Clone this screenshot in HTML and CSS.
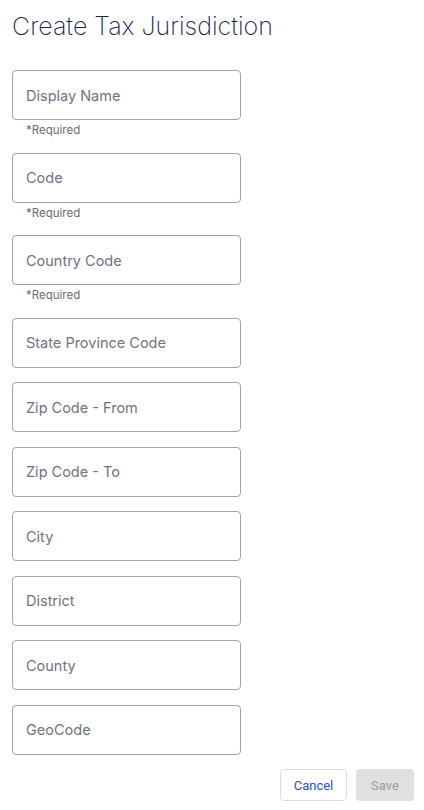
FILE: index.html
```html
<!DOCTYPE html>
<html lang="en">
<head>
    <meta charset="UTF-8">
    <meta name="viewport" content="width=device-width, initial-scale=1.0">
    <title>Create Tax Jurisdiction</title>
    <link rel="stylesheet" href="styles.css">
</head>
<body>
    <div class="page">
        <h1>Create Tax Jurisdiction</h1>
        <form class="form">
            <div class="field">
                <input type="text" placeholder="Display Name">
                <div class="hint">*Required</div>
            </div>
            <div class="field">
                <input type="text" placeholder="Code">
                <div class="hint">*Required</div>
            </div>
            <div class="field">
                <input type="text" placeholder="Country Code">
                <div class="hint">*Required</div>
            </div>
            <div class="field">
                <input type="text" placeholder="State Province Code">
            </div>
            <div class="field">
                <input type="text" placeholder="Zip Code - From">
            </div>
            <div class="field">
                <input type="text" placeholder="Zip Code - To">
            </div>
            <div class="field">
                <input type="text" placeholder="City">
            </div>
            <div class="field">
                <input type="text" placeholder="District">
            </div>
            <div class="field">
                <input type="text" placeholder="County">
            </div>
            <div class="field">
                <input type="text" placeholder="GeoCode">
            </div>
            <div class="actions">
                <button type="button" class="btn btn-cancel">Cancel</button>
                <button type="button" class="btn btn-save" disabled>Save</button>
            </div>
        </form>
    </div>
</body>
</html>
```

FILE: styles.css
```css
body {
    margin: 0;
    font-family: Inter, "Noto Sans", sans-serif;
    background: #fff;
}
.page {
    padding: 10px 10px 0 12px;
}
h1 {
    margin: 0 0 28px 0;
    font-size: 25px;
    line-height: 32px;
    font-weight: 200;
    color: #1a1f52;
}
.field {
    margin-bottom: 14.5px;
}
.field input {
    display: block;
    box-sizing: border-box;
    width: 229px;
    height: 50px;
    padding: 0 13px;
    border: 1px solid #a3a3a3;
    border-radius: 4px;
    font-family: Inter, "Noto Sans", sans-serif;
    font-size: 14.5px;
    color: #333;
    outline: none;
}
.field input::placeholder {
    color: #707282;
}
.hint {
    padding: 2px 0 0 14px;
    font-size: 11.5px;
    line-height: 16px;
    color: #6a6c76;
}
.actions {
    display: flex;
    justify-content: flex-end;
    gap: 9px;
}
.btn {
    height: 32px;
    border-radius: 4px;
    font-family: Roboto, Arial, sans-serif;
    font-size: 13px;
    cursor: pointer;
}
.btn-cancel {
    width: 67px;
    background: #fff;
    border: 1px solid #dcdcdc;
    color: #1e4fc7;
}
.btn-save {
    width: 58px;
    background: #e0e0e0;
    border: none;
    color: #9c9c9c;
}
```
